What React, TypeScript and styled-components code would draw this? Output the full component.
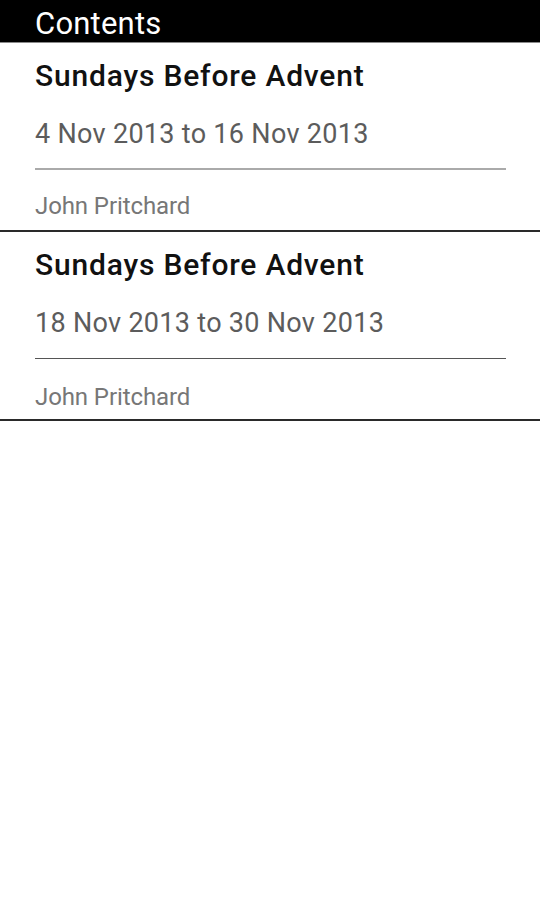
import React from "react";
import styled, { createGlobalStyle } from "styled-components";

const GlobalStyle = createGlobalStyle`
  html, body {
    margin: 0;
    padding: 0;
    background: #ffffff;
    font-family: Roboto, "Liberation Sans", sans-serif;
  }
`;

interface Reading {
  title: string;
  dates: string;
  author: string;
}

const readings: Reading[] = [
  {
    title: "Sundays Before Advent",
    dates: "4 Nov 2013 to 16 Nov 2013",
    author: "John Pritchard",
  },
  {
    title: "Sundays Before Advent",
    dates: "18 Nov 2013 to 30 Nov 2013",
    author: "John Pritchard",
  },
];

const Screen = styled.div`
  width: 540px;
  min-height: 900px;
  background: #ffffff;
`;

const TitleBar = styled.header`
  box-sizing: border-box;
  height: 43px;
  background: #000000;
  border-bottom: 1px solid #8a8a8a;
  display: flex;
  align-items: center;
  padding: 5px 35px 0;
  color: #ffffff;
  font-size: 31px;
  line-height: 36px;
  letter-spacing: 0.2px;
`;

const List = styled.ul`
  list-style: none;
  margin: 0;
  padding: 0;
`;

const Item = styled.li`
  display: flex;
  flex-direction: column;
  padding: 0 34px 0 35px;
  height: 187px;
  border-bottom: 2px solid #2a2a2a;
`;

const Title = styled.div`
  font-size: 30px;
  font-weight: 500;
  color: #111111;
  margin-top: 15px;
  line-height: 36px;
  letter-spacing: 0.8px;
`;

const Dates = styled.div`
  font-size: 27px;
  color: #5c5c5c;
  margin-top: 24px;
  line-height: 32px;
  letter-spacing: 0.3px;
`;

// first row is the highlighted one, its divider is lighter and thicker
const Rule = styled.hr<{ $selected: boolean }>`
  margin: ${(p) => (p.$selected ? "18px" : "19px")} 0 0;
  border: none;
  height: ${(p) => (p.$selected ? "2px" : "1px")};
  background: ${(p) => (p.$selected ? "#aaaaaa" : "#555555")};
`;

const Author = styled.div<{ $selected: boolean }>`
  font-size: 24px;
  color: #777777;
  margin-top: ${(p) => (p.$selected ? "22px" : "24px")};
  line-height: 28px;
  letter-spacing: -0.1px;
`;

export default function App() {
  return (
    <Screen>
      <GlobalStyle />
      <TitleBar>Contents</TitleBar>
      <List>
        {readings.map((r, i) => (
          <Item key={i}>
            <Title>{r.title}</Title>
            <Dates>{r.dates}</Dates>
            <Rule $selected={i === 0} />
            <Author $selected={i === 0}>{r.author}</Author>
          </Item>
        ))}
      </List>
    </Screen>
  );
}
